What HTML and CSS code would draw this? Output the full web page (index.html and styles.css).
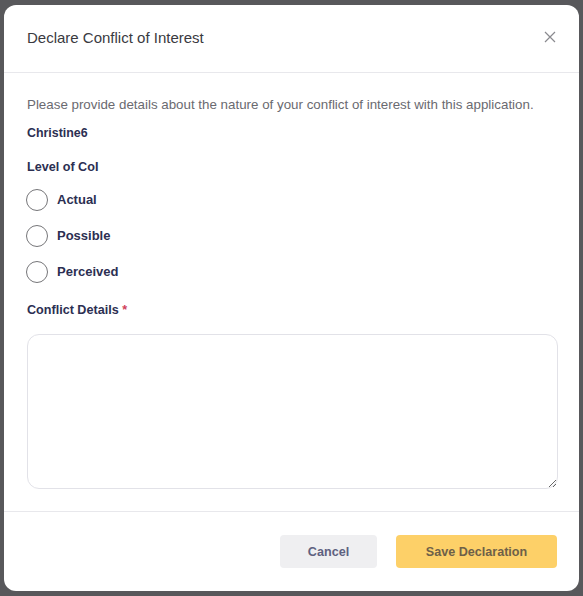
FILE: index.html
```html
<!DOCTYPE html>
<html>
<head>
<meta charset="utf-8">
<link rel="stylesheet" href="styles.css">
</head>
<body>
<div class="modal">
  <div class="modal-header">
    <h2 class="modal-title">Declare Conflict of Interest</h2>
    <button class="close" aria-label="Close">
      <svg width="12" height="12" viewBox="0 0 12 12"><path d="M1 1L11 11M11 1L1 11" stroke="#8a8a8f" stroke-width="1.2" fill="none"/></svg>
    </button>
  </div>
  <div class="modal-body">
    <p class="intro">Please provide details about the nature of your conflict of interest with this application.</p>
    <div class="name">Christine6</div>
    <div class="label level">Level of CoI</div>
    <div class="radios">
      <label class="radio"><span class="circle"></span><span class="radio-text">Actual</span></label>
      <label class="radio"><span class="circle"></span><span class="radio-text">Possible</span></label>
      <label class="radio"><span class="circle"></span><span class="radio-text">Perceived</span></label>
    </div>
    <div class="label details">Conflict Details <span class="req">*</span></div>
    <textarea class="textarea"></textarea>
  </div>
  <div class="modal-footer">
    <button class="btn btn-cancel">Cancel</button>
    <button class="btn btn-save">Save Declaration</button>
  </div>
</div>
</body>
</html>
```
FILE: styles.css
```css
* { box-sizing: border-box; }
html, body { margin: 0; padding: 0; }
body {
  background: #58585b;
  font-family: "Liberation Sans", Arial, sans-serif;
  width: 583px;
  height: 596px;
  padding: 5px 4px 5px 4px;
}
.modal {
  background: #fff;
  border-radius: 12px;
  width: 575px;
  height: 586px;
  display: flex;
  flex-direction: column;
}
.modal-header {
  height: 68px;
  border-bottom: 1px solid #e8e8ec;
  display: flex;
  align-items: center;
  justify-content: space-between;
  padding: 0 22px 0 23px;
}
.modal-title {
  margin: 0;
  font-size: 15px;
  font-weight: normal;
  color: #3a3a3f;
  padding-bottom: 3px;
}
.close {
  background: none;
  border: none;
  padding: 0;
  width: 14px;
  height: 14px;
  display: flex;
  align-items: center;
  justify-content: center;
  margin-bottom: 4px;
}
.modal-body {
  padding: 24px 21px 22px 23px;
  display: flex;
  flex-direction: column;
  flex: 1;
}
.intro {
  margin: 0;
  font-size: 13.35px;
  line-height: 16px;
  color: #6a6a70;
}
.name {
  margin-top: 12px;
  font-size: 12.4px;
  line-height: 16px;
  font-weight: bold;
  color: #2c2f52;
}
.label {
  font-size: 12.6px;
  line-height: 16px;
  font-weight: bold;
  color: #2c2f52;
}
.level { margin-top: 18px; }
.radios {
  margin-top: 14px;
  display: flex;
  flex-direction: column;
  gap: 14px;
}
.radio {
  display: flex;
  align-items: center;
  height: 22px;
}
.circle {
  width: 22px;
  height: 22px;
  margin-left: -1px;
  border: 1.5px solid #767679;
  border-radius: 50%;
  background: #fff;
  flex: none;
}
.radio-text {
  margin-left: 9px;
  font-size: 13px;
  font-weight: bold;
  color: #2c2f52;
  padding-bottom: 2px;
}
.details { margin-top: 19px; }
.req { color: #d0405a; }
.textarea {
  margin-top: 16px;
  width: 531px;
  height: 155px;
  border: 1px solid #e2e2e8;
  border-radius: 12px;
  resize: vertical;
  font-family: inherit;
  outline: none;
}
.modal-footer {
  border-top: 1px solid #e8e8ec;
  display: flex;
  justify-content: flex-end;
  gap: 19px;
  padding: 23px 22px 23px 23px;
}
.btn {
  height: 33px;
  border: none;
  border-radius: 4px;
  font-family: inherit;
  font-size: 12.6px;
  font-weight: bold;
}
.btn-cancel {
  width: 97px;
  background: #efeff1;
  color: #5e6180;
}
.btn-save {
  width: 161px;
  background: #fdd068;
  color: #6e6048;
}
```
